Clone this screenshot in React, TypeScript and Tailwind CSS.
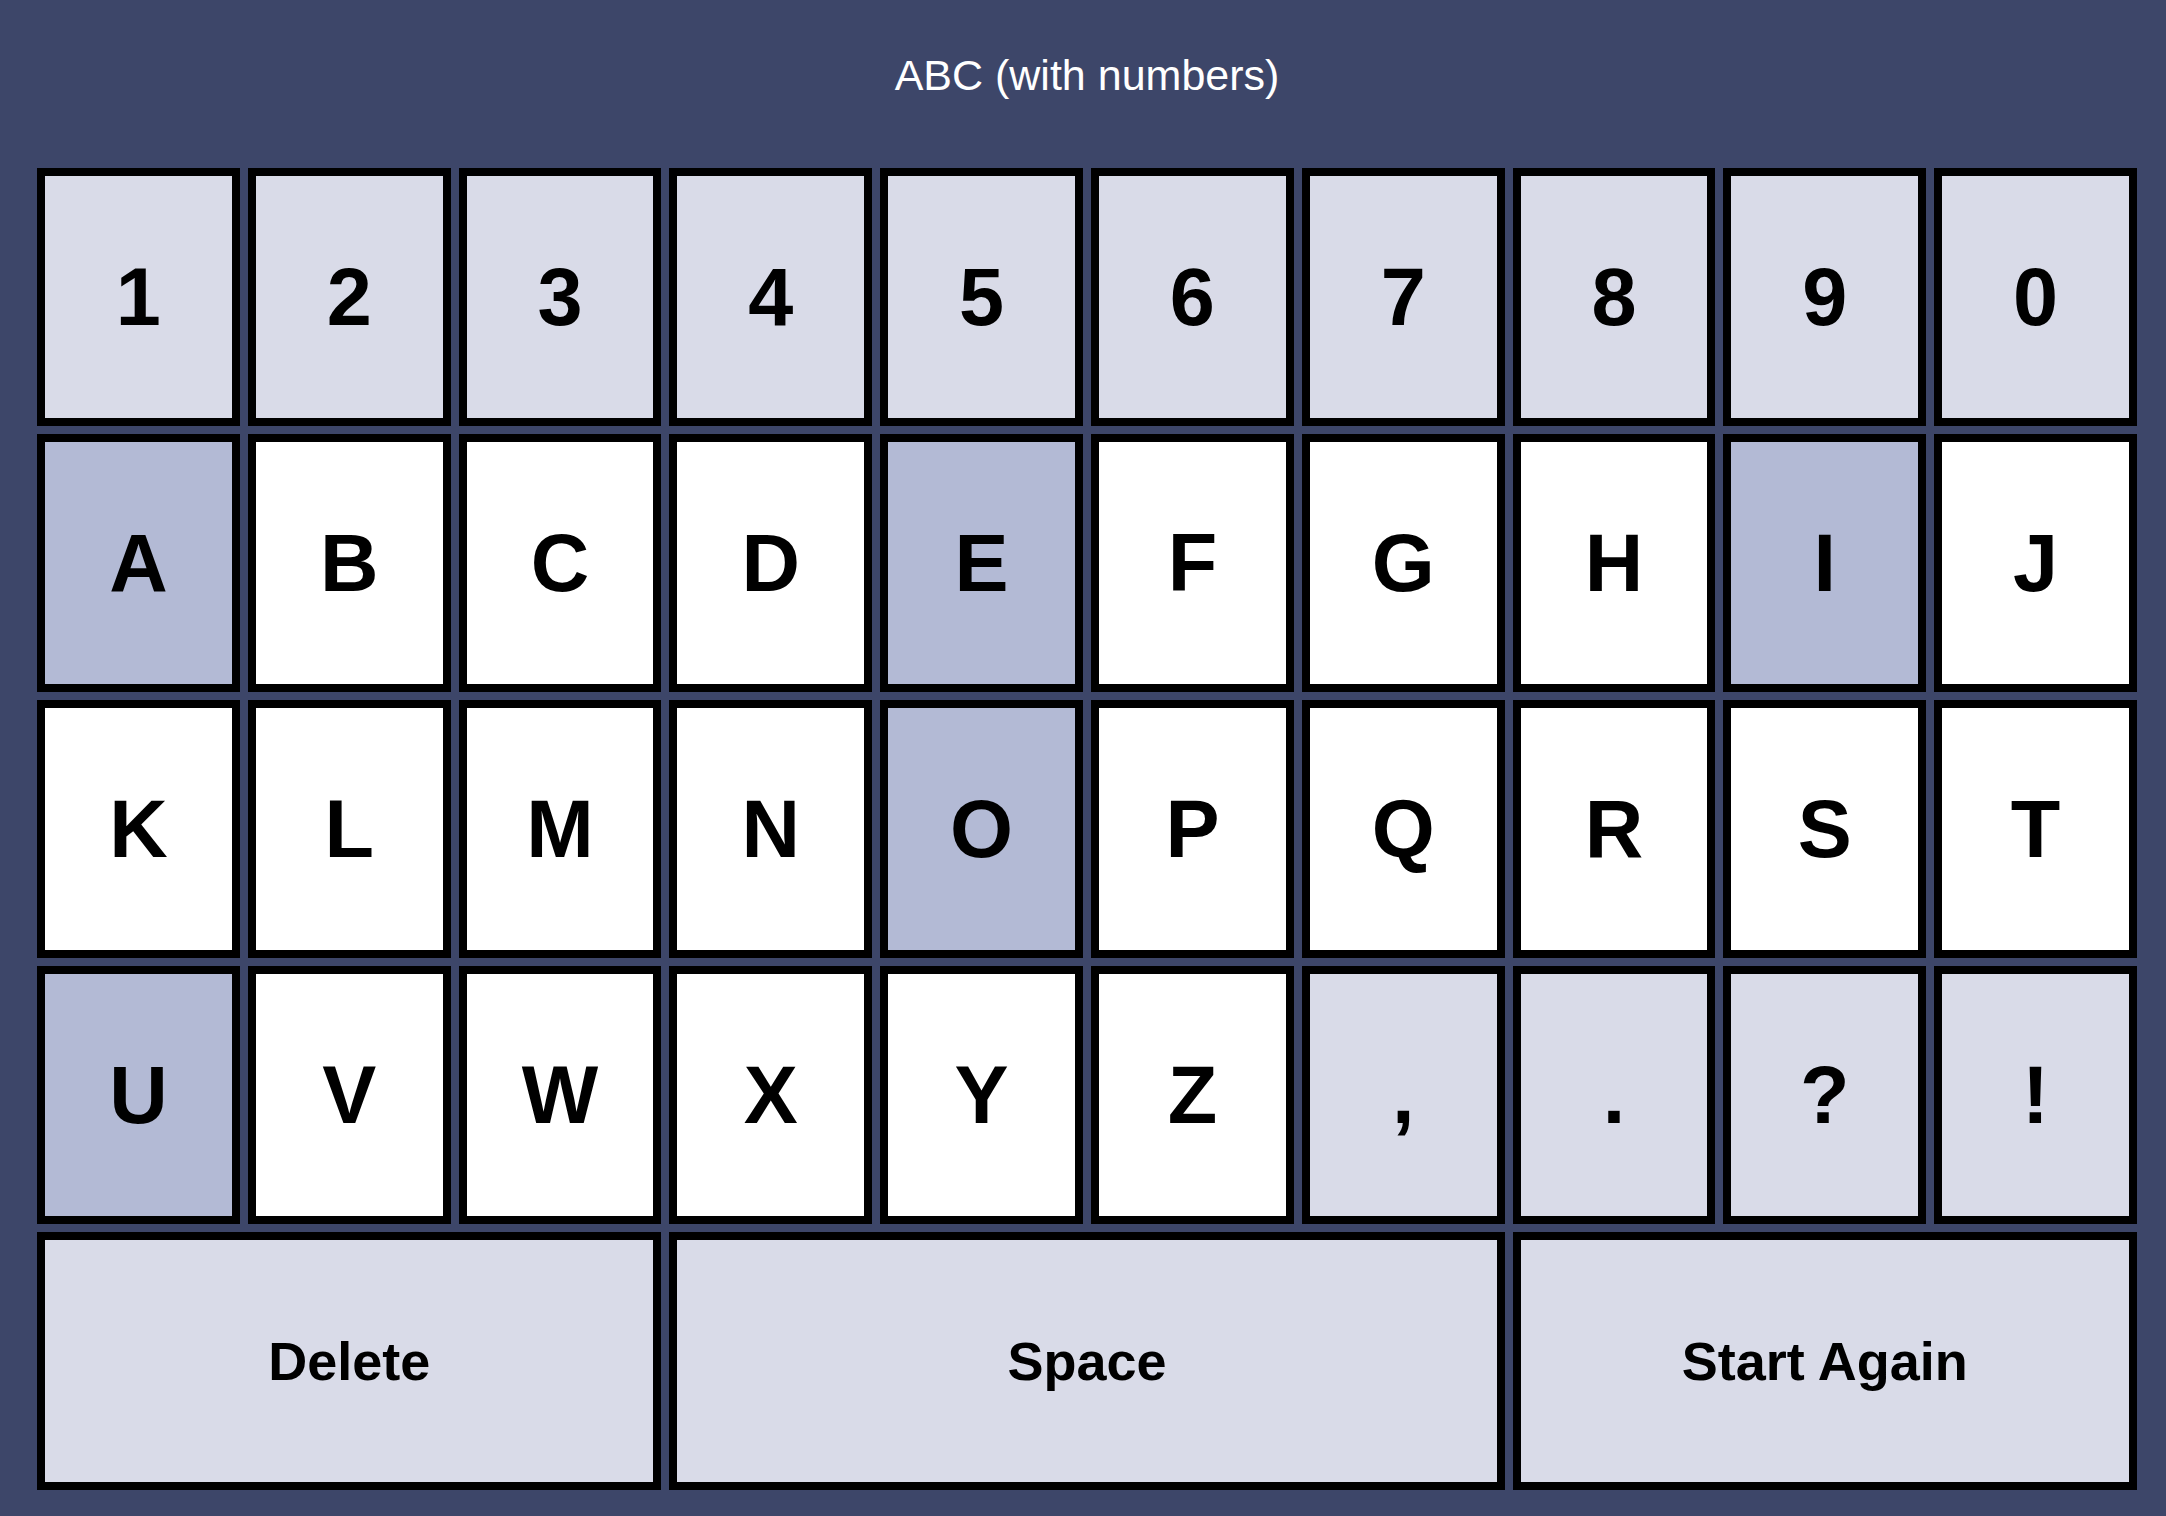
import React from "react";

type Tone = "light" | "white" | "vowel";

const toneClass: Record<Tone, string> = {
  light: "bg-[#d9dbe8]",
  white: "bg-white",
  vowel: "bg-[#b3bad5]",
};

const rows: { label: string; tone: Tone }[][] = [
  "1234567890".split("").map((c) => ({ label: c, tone: "light" as Tone })),
  "ABCDEFGHIJ".split("").map((c) => ({ label: c, tone: ("AEI".includes(c) ? "vowel" : "white") as Tone })),
  "KLMNOPQRST".split("").map((c) => ({ label: c, tone: (c === "O" ? "vowel" : "white") as Tone })),
  [
    ...["U", "V", "W", "X", "Y", "Z"].map((c) => ({ label: c, tone: (c === "U" ? "vowel" : "white") as Tone })),
    ...[",", ".", "?", "!"].map((c) => ({ label: c, tone: "light" as Tone })),
  ],
];

function Key({ label, tone, className = "", small = false }: { label: string; tone: Tone; className?: string; small?: boolean }) {
  return (
    <button
      className={`${toneClass[tone]} ${className} border-8 border-black flex items-center justify-center font-bold text-black leading-none ${
        small ? "text-[54px]" : "text-[81px]"
      }`}
    >
      {label}
    </button>
  );
}

export default function App() {
  return (
    <div className="w-full h-[1516px] bg-[#3d4669] flex flex-col font-['Liberation_Sans',Arial,sans-serif] overflow-hidden">
      {/* Title */}
      <div className="pt-[51px] pl-[37px] pr-[29px] h-[168px] text-center text-white text-[43px] leading-[48px]">
        ABC (with numbers)
      </div>

      {/* Keyboard */}
      <div className="grid grid-cols-10 grid-rows-[repeat(5,258px)] gap-[8px] pl-[37px] pr-[29px]">
        {rows.map((row) =>
          row.map((k) => <Key key={k.label} label={k.label} tone={k.tone} />)
        )}
        <Key label="Delete" tone="light" className="col-span-3" small />
        <Key label="Space" tone="light" className="col-span-4" small />
        <Key label="Start Again" tone="light" className="col-span-3" small />
      </div>
    </div>
  );
}
